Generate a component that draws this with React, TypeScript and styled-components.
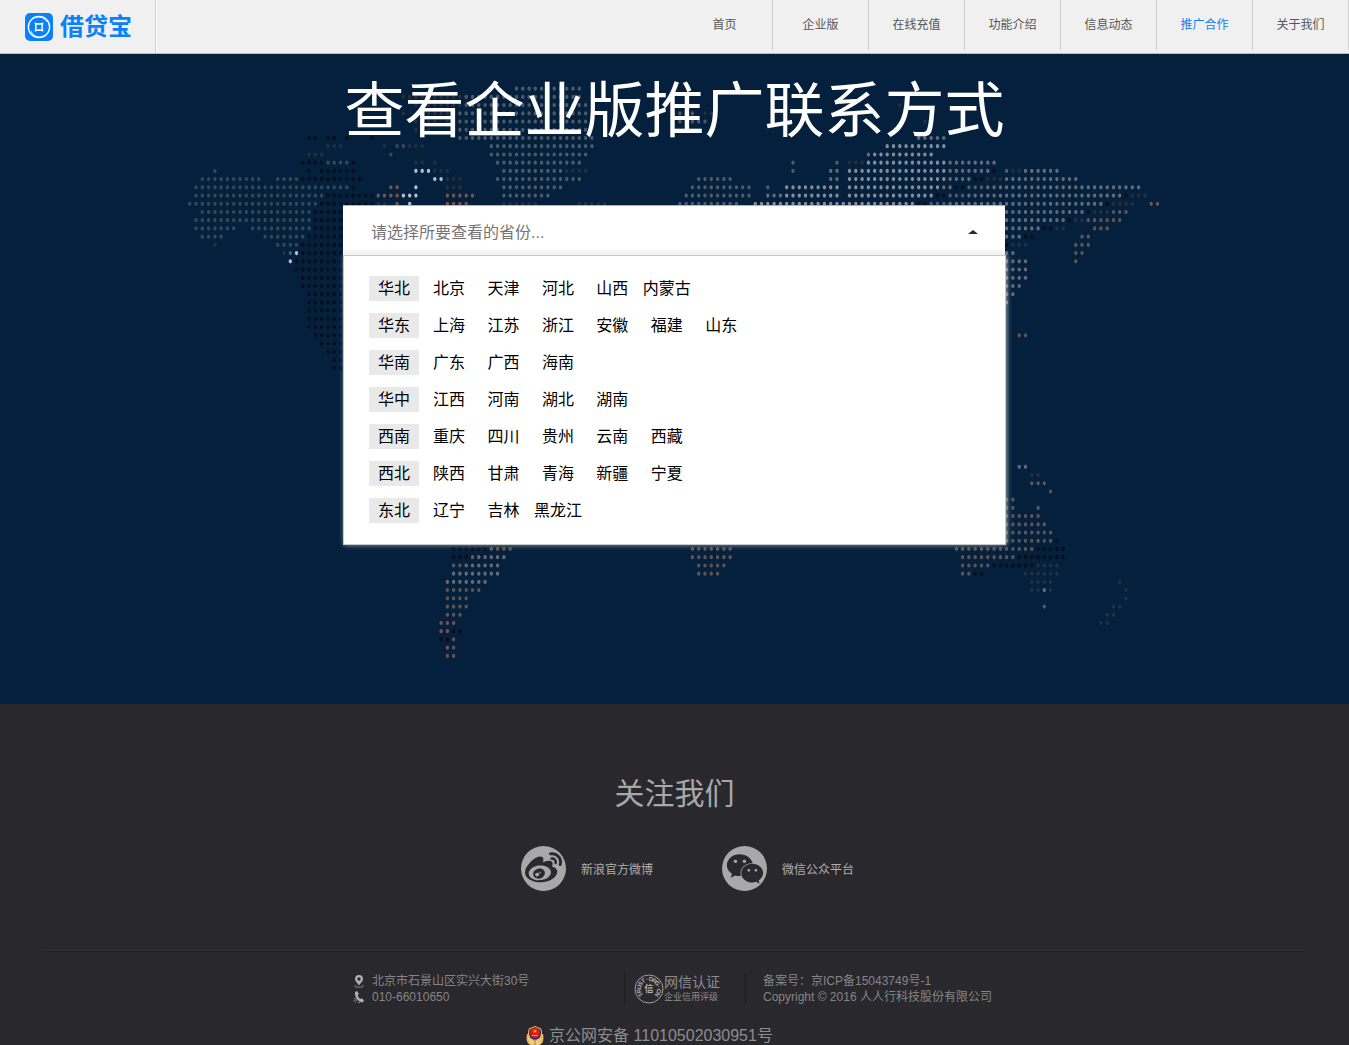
import React from 'react';
import styled, { createGlobalStyle } from 'styled-components';
import { FaWeibo, FaWeixin } from 'react-icons/fa';

const GlobalStyle = createGlobalStyle`
  * { box-sizing: border-box; }
  body {
    margin: 0;
    background: #29282d;
    font-family: "Liberation Sans", "Noto Sans CJK SC", sans-serif;
    font-size: 12px;
  }
  ul, ol, dl, dd, p, h1, h2, address { margin: 0; padding: 0; list-style: none; font-style: normal; }
  a { color: inherit; text-decoration: none; }
`;

/* ---------- header ---------- */

const Header = styled.header`
  display: flex;
  justify-content: space-between;
  height: 54px;
  background: #f0f0f0;
  border-bottom: 1px solid #b9bdc4;
`;

const Brand = styled.a`
  display: flex;
  align-items: center;
  gap: 7px;
  width: 156px;
  padding-left: 25px;
  border-right: 1px solid #cfcfcf;
  box-shadow: 1px 0 0 #fff;
`;

const BrandName = styled.span`
  color: #0a80fb;
  font-size: 24px;
  font-weight: 700;
  line-height: 28px;
`;

const NavList = styled.ul`
  display: flex;
`;

const NavLink = styled.a<{ $active?: boolean }>`
  display: block;
  width: 96px;
  height: 50px;
  border-right: 1px solid #cfcfcf;
  line-height: 51px;
  text-align: center;
  color: ${(p) => (p.$active ? '#0a80fb' : '#555')};
`;

/* ---------- hero ---------- */

const Hero = styled.main`
  position: relative;
  min-height: 650px;
  background: #04203c;
`;

const MapArt = styled.svg`
  position: absolute;
  top: 0;
  left: 50%;
  transform: translateX(-50%);
`;

const HeroContent = styled.div`
  position: relative;
  max-width: 663px;
  margin: 0 auto;
  padding-top: 18px;
`;

const Title = styled.h1`
  margin-bottom: 53px;
  color: #fff;
  font-size: 60px;
  font-weight: 400;
  line-height: 80px;
  text-align: center;
  white-space: nowrap;
`;

const Picker = styled.div`
  display: flex;
  height: 50px;
  margin-right: 1px;
  border-top: 1px solid #b0b4ba;
  background: linear-gradient(#fff 42px, #ececec);
`;

const PickerInput = styled.input`
  flex: 1;
  min-width: 0;
  padding: 4px 28px 0;
  border: 0;
  outline: 0;
  background: transparent;
  font: inherit;
  font-size: 16px;
  &::placeholder { color: #757575; opacity: 1; }
`;

const PickerToggle = styled.button`
  width: 64px;
  padding: 3px 0 0;
  border: 0;
  background: transparent;
`;

const Caret = styled.span`
  display: block;
  width: 0;
  margin: 0 auto;
  border: 5px solid transparent;
  border-top: 0;
  border-bottom: 4px solid #2b2b2b;
`;

const Regions = styled.dl`
  display: flex;
  flex-direction: column;
  gap: 12px;
  padding: 20px 25px 21px;
  border: 1px solid #c8c8c8;
  background: #fff;
  box-shadow: 1px 0 5px rgba(255, 255, 255, 0.6);
  font-size: 16px;
  line-height: 25px;
`;

const RegionRow = styled.div`
  display: flex;
  gap: 5px;
`;

const RegionName = styled.dt`
  width: 50px;
  background: #e9e9e9;
  text-align: center;
`;

const Provinces = styled.dd`
  flex: 1;
`;

const Province = styled.a`
  display: inline-block;
  width: 50px;
  color: #000;
  text-align: center;
  white-space: nowrap;
`;

/* ---------- footer ---------- */

const Footer = styled.footer`
  padding-top: 70px;
  background: #29282d;
  color: #858585;
`;

const FollowTitle = styled.h2`
  color: #a8a8a8;
  font-size: 30px;
  font-weight: 400;
  line-height: 40px;
  text-align: center;
`;

const FollowList = styled.ul`
  display: flex;
  justify-content: center;
  gap: 69px;
  padding: 32px 0 59px 26px;
`;

const FollowLink = styled.a`
  display: flex;
  align-items: center;
  gap: 15px;
  color: #b0b0b0;
`;

const FollowIcon = styled.span`
  display: grid;
  place-items: center;
  width: 45px;
  height: 45px;
  border-radius: 50%;
  background: #a8a8a8;
  color: #29282d;
`;

const Rule = styled.hr`
  height: 2px;
  margin: 0 44px;
  border: 0;
  border-top: 1px solid #343338;
  background: #1e1d21;
`;

const Info = styled.div`
  display: flex;
  max-width: 643px;
  margin: 0 auto;
  padding: 21px 0;
  line-height: 16px;
`;

const Contact = styled.address`
  width: 271px;
`;

const ContactLine = styled.p`
  display: flex;
  align-items: center;
  gap: 7px;
`;

const Trust = styled.a`
  display: flex;
  align-items: center;
  width: 122px;
  padding-left: 9px;
  border: solid #1c1b1f;
  border-width: 0 1px;
`;

const TrustText = styled.span`
  display: flex;
  flex-direction: column;
  color: #8d8d8d;
`;

const TrustName = styled.span`
  font-size: 14px;
`;

const TrustNote = styled.span`
  font-size: 9px;
  line-height: 14px;
`;

const Legal = styled.div`
  padding-left: 17px;
  white-space: nowrap;
`;

const Police = styled.a`
  display: flex;
  justify-content: center;
  gap: 5px;
  padding-right: 50px;
  color: #8d8d8d;
  font-size: 16px;
  line-height: 20px;
`;

/* ---------- dotted world map ---------- */

const DOT_COLORS: Record<string, string> = {
  t: '#33495a',
  d: '#050f1b',
  n: '#252f3d',
  g: '#4d5b69',
  h: '#858d99',
  m: '#636b78',
  b: '#5d5454',
  o: '#77534d',
  w: '#b3c0cf',
};

// Each row lists runs of dots as "<colour><first column>[-<last column>]".
const DOT_ROWS: Record<number, string> = {
  0: 'g51-61',
  1: 'n33-42 g43-61',
  2: 'n35-42 g43-62 n112',
  3: 'n33 n36-41 g42-62 g76-79 n81-82',
  4: 'n35-38 n40-41 g42-62 g77-81 n116',
  5: 'n35-37 g41-62',
  6: 'd18-19 d21-22 d24 d28 g42-63 m115-119',
  7: 'n21-23 n30 t32-33 n34-36 g47-63 h110-119',
  8: 'n18-20 t31 g47-62 m107 h108-117',
  9: 'd17-20 t21-24 d25 n35-36 n38 g48-61 g95 g102 n104-106 h107-119 m120-127',
  10: 't3 d18 d20-25 w35-37 n38-40 g49-58 n59-62 g95 m101-102 h104-119 m120-126 d127 g129 n130-131 m132-137',
  11: 't1-10 t13-16 d17-26 w38-39 n40-42 g48-61 g80-85 m101-102 h104-119 m120-123 d124-125 n126-128 m129-140',
  12: 't0-24 d25 o31-32 w35 n40-42 g49-58 g79-88 g91 h94-102 h104-118 m119-120 d121-122 g123-125 m126-150',
  13: 't0-20 d21-28 o29-32 w33-35 o40-44 g49-56 g78-88 m91-93 h94-102 h104-117 d118-119 g120-122 m123-147 d148 n149-151',
  14: 't-1-19 d20-28 n29-30 o32 w34 o40-43 n49-54 n61-65 g77-86 h89-114 d115-116 g117-119 m120-144 d145 n146-149 o152-153',
  15: 't1-18 d19-23 m129-141 d142 n143-145 b146-148',
  16: 't0-18 d19-23 m129-138 d139 n140-141 b142-147',
  17: 't0-6 t9-18 d19-23 m129-134 d135-136 n137-138 b143-145',
  18: 't1-4 t11-17 d18-23 m129-131 d132-133 b141-142',
  19: 'n3 t13-16 d17-23 d129 n130-132 b140-142',
  20: 'n14 w16 g15 d17-23 m129-130 b140-141',
  21: 'w15 d16-23 m129-132 b140',
  22: 'd16-23 m129-132',
  23: 'd17-23 m129-132',
  24: 'd17-23 m129-131',
  25: 'd18-23 m129-130',
  26: 'd18-23 m129',
  27: 'd18-23',
  28: 'd18-23',
  29: 'd18-23',
  30: 'd19-23 b131-132',
  31: 'd20-23',
  32: 'd21-23',
  33: 'd22-23',
  34: 'd22-23',
  46: 'm131-132',
  47: 'n133-134',
  48: 'b133-135',
  49: 'b136',
  50: 'b129-130',
  51: 'b129-130 b134',
  52: 'b129-134',
  53: 'b129-135',
  54: 'b129-136',
  55: 'b129-136 d137',
  56: 'd41-46 o47 b48-50 b79-85 b121-133 d134-138',
  57: 'd41-43 o44 m45-49 b79-85 b122-130 d131-138',
  58: 'b41-42 m43-48 b80-84 b122-126 d127-133 n134-137',
  59: 'm41-48 b80-83 b122-123 d124-125 n132-137',
  60: 'm40-46 n133-136 n147',
  61: 'b40-45 n133-134 m135 n136 n148',
  62: 'b40-43 n148',
  63: 'b40-43 g135 n146-147',
  64: 'b40-42 n145-146',
  65: 'o39-41 n144-145',
  66: 'o39-40 d41-42',
  67: 'd39-40 b41',
  68: 'o40 b41',
  69: 'b40-41',
};

function buildDots() {
  const paths: Record<string, string> = {};
  Object.entries(DOT_ROWS).forEach(([row, runs]) => {
    const y = (34.7 + Number(row) * 8.22).toFixed(1);
    runs.split(' ').forEach((run) => {
      const m = /^([a-z])(-?\d+)(?:-(\d+))?$/.exec(run);
      if (!m) return;
      const first = Number(m[2]);
      const last = m[3] === undefined ? first : Number(m[3]);
      for (let c = first; c <= last; c += 1) {
        const x = (9.3 + c * 6.284).toFixed(1);
        paths[m[1]] = `${paths[m[1]] ?? ''}M${x} ${y}a1.7 2.1 0 1 0 3.4 0a1.7 2.1 0 1 0 -3.4 0`;
      }
    });
  });
  return Object.entries(paths);
}

const DOTS = buildDots();

const WorldMap = () => (
  <MapArt width="980" height="620" viewBox="0 0 980 620" aria-hidden="true">
    {DOTS.map(([key, d]) => (
      <path key={key} d={d} fill={DOT_COLORS[key]} />
    ))}
  </MapArt>
);

/* ---------- icons ---------- */

const LogoMark = () => (
  <svg width="28" height="28" viewBox="0 0 28 28" fill="none" aria-hidden="true">
    <rect width="28" height="28" rx="5" fill="#0a80fb" />
    <circle cx="14" cy="14" r="10.6" stroke="#fff" strokeWidth="1.4" />
    <path d="M6 18a9 9 0 0 0 14 4M22 9a9 9 0 0 0-12-4" stroke="#fff" strokeWidth=".8" />
    <path d="M10.500 10.500q3.500 1 7 0q-1 3.500 0 7q-3.500-1-7 0q1-3.500 0-7z" stroke="#fff" strokeWidth="1.500" />
  </svg>
);

const PinIcon = () => (
  <svg width="12" height="14" viewBox="0 0 12 14" aria-hidden="true">
    <path
      fill="#b0b0b0"
      fillRule="evenodd"
      d="M6 1a4 4 0 0 0-4 4c0 2.500 2.600 4.200 4 6.500C7.400 9.200 10 7.500 10 5a4 4 0 0 0-4-4zm0 2.300a1.700 1.700 0 1 1 0 3.400 1.700 1.700 0 0 1 0-3.400z"
    />
    <path d="M2.500 11c-2 1.200 0 2.200 3.500 2.200s5.500-1 3.500-2.200" stroke="#8a8a8a" fill="none" />
  </svg>
);

const PhoneIcon = () => (
  <svg width="12" height="14" viewBox="0 0 12 14" aria-hidden="true">
    <path
      fill="#b0b0b0"
      d="M2 2l2-1 2 3-1.400 1.200c.5 1.500 1.400 2.800 2.600 3.700L9 8.200l2 2.600-1.500 1.700C5 12 1.500 7 2 2z"
    />
    <path d="M1 8.500c1.500 0 2.500 1 3 2.500M.5 10.500c1.200 0 2 .8 2.300 2M5 12.500h2" stroke="#8a8a8a" fill="none" />
  </svg>
);

const SEAL_LETTERS = 'TRUST·ORG·CN'.split('');

const TrustSeal = () => (
  <svg width="30" height="30" viewBox="0 0 30 30" aria-hidden="true">
    <circle cx="15" cy="15" r="14" fill="none" stroke="#a0a0a0" />
    {SEAL_LETTERS.map((letter, i) => (
      <text
        key={i}
        x="15"
        y="7"
        fill="#b0b0b0"
        fontSize="6"
        fontWeight="700"
        textAnchor="middle"
        transform={`rotate(${-124 + i * 22.5} 15 15)`}
      >
        {letter}
      </text>
    ))}
    <text x="15" y="18" fill="#b0b0b0" fontSize="9" fontWeight="700" textAnchor="middle">信</text>
  </svg>
);

const PoliceBadge = () => (
  <svg width="18" height="20" viewBox="0 0 18 20" aria-hidden="true">
    <path d="M1 8Q-1 17 5 19.500h8Q19 17 17 8z" fill="#e3b45c" />
    <path d="M9 0Q12 1 15 2.500Q17 7 15 12L9 16L3 12Q1 7 3 2.500Q6 1 9 0z" fill="#e8c67a" />
    <path d="M9 1Q12 2 14.500 3.500Q16 8 13.500 12L9 14.500L4.500 12Q2 8 3.500 3.500Q6 2 9 1z" fill="#2b2b6e" />
    <circle cx="9" cy="6.800" r="5.200" fill="#d81e12" />
    <path d="M9 3l.7 1.500h1.600L10 5.500l.5 1.500L9 6l-1.500 1L8 5.500 6.700 4.500h1.600zM6 9h6v1H6z" fill="#f2a13a" />
    <path d="M2 12q2 4 6 4M16 12q-2 4-6 4M3 16q3 3 6 1q3 2 6-1" stroke="#fae3a5" fill="none" />
    <path d="M9 13v6" stroke="#b9852f" />
  </svg>
);

/* ---------- data ---------- */

const NAV = ['首页', '企业版', '在线充值', '功能介绍', '信息动态', '推广合作', '关于我们'];

const REGIONS: [string, string[]][] = [
  ['华北', ['北京', '天津', '河北', '山西', '内蒙古']],
  ['华东', ['上海', '江苏', '浙江', '安徽', '福建', '山东']],
  ['华南', ['广东', '广西', '海南']],
  ['华中', ['江西', '河南', '湖北', '湖南']],
  ['西南', ['重庆', '四川', '贵州', '云南', '西藏']],
  ['西北', ['陕西', '甘肃', '青海', '新疆', '宁夏']],
  ['东北', ['辽宁', '吉林', '黑龙江']],
];

export default function App() {
  return (
    <>
      <GlobalStyle />
      <Header>
        <Brand href="#">
          <LogoMark />
          <BrandName>借贷宝</BrandName>
        </Brand>
        <nav>
          <NavList>
            {NAV.map((label) => (
              <li key={label}>
                <NavLink href="#" $active={label === '推广合作'}>{label}</NavLink>
              </li>
            ))}
          </NavList>
        </nav>
      </Header>

      <Hero>
        <WorldMap />
        <HeroContent>
          <Title>查看企业版推广联系方式</Title>
          <Picker>
            <PickerInput type="text" readOnly aria-label="省份" placeholder="请选择所要查看的省份..." />
            <PickerToggle type="button" aria-label="收起" aria-expanded="true">
              <Caret />
            </PickerToggle>
          </Picker>
          <Regions>
            {REGIONS.map(([name, provinces]) => (
              <RegionRow key={name}>
                <RegionName>{name}</RegionName>
                <Provinces>
                  {provinces.map((province) => (
                    <React.Fragment key={province}>
                      <Province href="#">{province}</Province>{' '}
                    </React.Fragment>
                  ))}
                </Provinces>
              </RegionRow>
            ))}
          </Regions>
        </HeroContent>
      </Hero>

      <Footer>
        <FollowTitle>关注我们</FollowTitle>
        <FollowList>
          <li>
            <FollowLink href="#">
              <FollowIcon><FaWeibo size={37} /></FollowIcon>
              新浪官方微博
            </FollowLink>
          </li>
          <li>
            <FollowLink href="#">
              <FollowIcon><FaWeixin size={38} /></FollowIcon>
              微信公众平台
            </FollowLink>
          </li>
        </FollowList>
        <Rule />
        <Info>
          <Contact>
            <ContactLine><PinIcon />北京市石景山区实兴大街30号</ContactLine>
            <ContactLine><PhoneIcon />010-66010650</ContactLine>
          </Contact>
          <Trust href="#">
            <TrustSeal />
            <TrustText>
              <TrustName>网信认证</TrustName>
              <TrustNote>企业信用评级</TrustNote>
            </TrustText>
          </Trust>
          <Legal>
            <p>备案号：京ICP备15043749号-1</p>
            <p>Copyright © 2016 人人行科技股份有限公司</p>
          </Legal>
        </Info>
        <Police href="#">
          <PoliceBadge />
          京公网安备 11010502030951号
        </Police>
      </Footer>
    </>
  );
}
